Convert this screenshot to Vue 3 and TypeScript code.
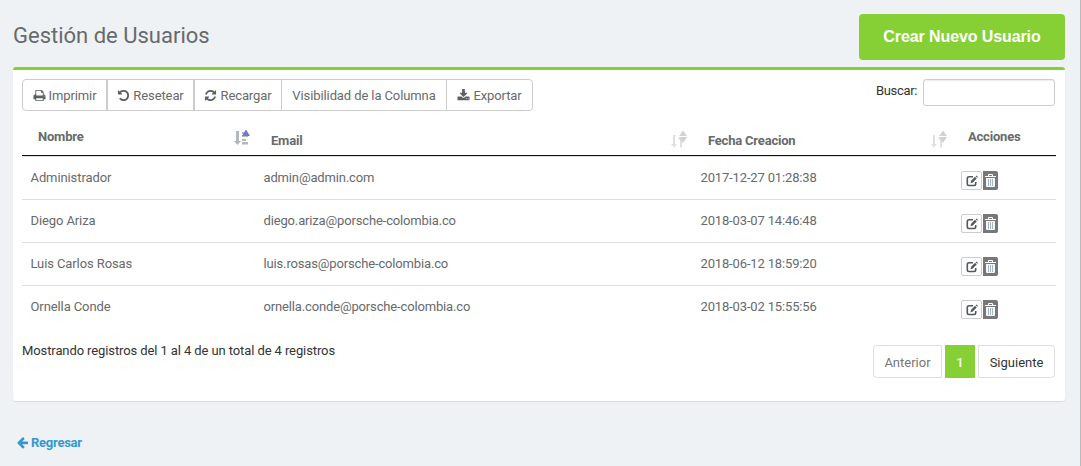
<script setup lang="ts">
interface User {
  name: string
  email: string
  created: string
}
interface Tool {
  label: string
  icon?: string
}

const users: User[] = [
  { name: 'Administrador', email: 'admin@admin.com', created: '2017-12-27 01:28:38' },
  { name: 'Diego Ariza', email: 'diego.ariza@porsche-colombia.co', created: '2018-03-07 14:46:48' },
  { name: 'Luis Carlos Rosas', email: 'luis.rosas@porsche-colombia.co', created: '2018-06-12 18:59:20' },
  { name: 'Ornella Conde', email: 'ornella.conde@porsche-colombia.co', created: '2018-03-02 15:55:56' },
]

const tools: Tool[] = [
  {
    label: 'Imprimir',
    icon: 'M448 1536h896v-256h-896v256zm0-640h896v-384h-160q-40 0-68-28t-28-68v-160h-640v640zm1152 64q0-26-19-45t-45-19-45 19-19 45 19 45 45 19 45-19 19-45zm128 0v416q0 13-9.500 22.500t-22.500 9.500h-224v160q0 40-28 68t-68 28h-960q-40 0-68-28t-28-68v-160h-224q-13 0-22.500-9.500t-9.500-22.500v-416q0-79 56.500-135.500t135.500-56.500h64v-544q0-40 28-68t68-28h672q40 0 88 20t76 48l152 152q28 28 48 76t20 88v256h64q79 0 135.500 56.500t56.500 135.500z',
  },
  {
    label: 'Resetear',
    icon: 'M1664 896q0 156-61 298t-164 245-245 164-298 61q-172 0-327-72.500t-264-204.500q-7-10-6.500-22.500t8.500-20.500l137-138q10-9 25-9 16 2 23 12 73 95 179 147t225 52q104 0 198.500-40.500t163.500-109.500 109.500-163.500 40.500-198.500-40.500-198.500-109.500-163.500-163.500-109.500-198.500-40.500q-98 0-188 35.500t-160 101.500l137 138q31 30 14 69-17 40-59 40h-448q-26 0-45-19t-19-45v-448q0-42 40-59 39-17 69 14l130 129q107-101 244.500-156.500t284.500-55.500q156 0 298 61t245 164 164 245 61 298z',
  },
  {
    label: 'Recargar',
    icon: 'M1639 1056q0 5-1 7-64 268-268 434.500t-478 166.500q-146 0-282.500-55t-243.500-157l-129 129q-19 19-45 19t-45-19-19-45v-448q0-26 19-45t45-19h448q26 0 45 19t19 45-19 45l-137 137q71 66 161 102t187 36q134 0 250-65t186-179q11-17 53-117 8-23 30-23h192q13 0 22.500 9.500t9.500 22.500zm25-800v448q0 26-19 45t-45 19h-448q-26 0-45-19t-19-45 19-45l138-138q-148-137-349-137-134 0-250 65t-186 179q-11 17-53 117-8 23-30 23h-199q-13 0-22.500-9.500t-9.500-22.500v-7q65-268 270-434.500t480-166.500q146 0 284 55.500t245 156.500l130-129q19-19 45-19t45 19 19 45z',
  },
  { label: 'Visibilidad de la Columna' },
  {
    label: 'Exportar',
    icon: 'M1344 1344q0-26-19-45t-45-19-45 19-19 45 19 45 45 19 45-19 19-45zm256 0q0-26-19-45t-45-19-45 19-19 45 19 45 45 19 45-19 19-45zm128-224v320q0 40-28 68t-68 28h-1472q-40 0-68-28t-28-68v-320q0-40 28-68t68-28h465l135 136q58 56 136 56t136-56l136-136h464q40 0 68 28t28 68zm-325-569q17 41-14 70l-448 448q-18 19-45 19t-45-19l-448-448q-31-29-14-70 17-39 59-39h256v-448q0-26 19-45t45-19h256q26 0 45 19t19 45v448h256q42 0 59 39z',
  },
]
</script>

<template>
  <div class="page">
    <header class="top">
      <h1>Gestión de Usuarios</h1>
      <button class="create">Crear Nuevo Usuario</button>
    </header>

    <section class="card">
      <div class="toolbar">
        <div class="tools">
          <button v-for="t in tools" :key="t.label" class="tool">
            <svg v-if="t.icon" viewBox="0 0 1792 1792"><path :d="t.icon" /></svg>
            <span>{{ t.label }}</span>
          </button>
        </div>
        <label class="search"><span>Buscar:</span><input type="text" /></label>
      </div>

      <div class="table">
        <div class="row head">
          <div class="cell">
            Nombre
            <svg class="sort asc" viewBox="0 0 17 18">
              <path fill="#b5b8ba" d="M2 3h3v10h2l-3.500 4-3.500-4h2zM8 4h4v2h-4zM8 7h6v2h-6zM8 11h4v2h-4zM8 14h6v2.500h-6z" />
              <path fill="#7378d8" d="M8 8l4-6.500 4 6.500z" />
            </svg>
          </div>
          <div class="cell low">
            Email
            <svg class="sort" viewBox="0 0 17 18">
              <path fill="#dfe0e2" d="M2 5h2v9h2l-3 3.500-3-3.500h2zM8 7h3v10.500h-2v-8h-2z" />
              <path fill="#d0d2d3" d="M8 6l4-5.500 4 5.500zM8 7h8l-4 6z" />
            </svg>
          </div>
          <div class="cell low">
            Fecha Creacion
            <svg class="sort" viewBox="0 0 17 18">
              <path fill="#dfe0e2" d="M2 5h2v9h2l-3 3.500-3-3.500h2zM8 7h3v10.500h-2v-8h-2z" />
              <path fill="#d0d2d3" d="M8 6l4-5.500 4 5.500zM8 7h8l-4 6z" />
            </svg>
          </div>
          <div class="cell">Acciones</div>
        </div>
        <div v-for="u in users" :key="u.email" class="row">
          <div class="cell">{{ u.name }}</div>
          <div class="cell tight">{{ u.email }}</div>
          <div class="cell tight">{{ u.created }}</div>
          <div class="cell actions">
            <button class="edit" aria-label="Editar">
              <svg viewBox="0 0 12 12">
                <path fill="none" stroke="#52585c" stroke-width="1.600" d="M7 1.800H3Q1.300 1.800 1.300 3.500v5.300Q1.300 10.500 3 10.500h5Q9.700 10.500 9.700 8.800V7" />
                <path fill="#52585c" d="M4.500 8.200l.6-2.500L9 1.800l1.700 1.700-3.900 3.900zM9.600 1.200l.9-.8 1.500 1.500-.8.900z" />
              </svg>
            </button>
            <button class="del" aria-label="Eliminar">
              <svg viewBox="0 0 11 13">
                <path fill="none" stroke="#fff" d="M3.500 2V.5h4V2" />
                <path fill="#fff" d="M0 2h11v1H0z" />
                <path fill="#f4f8fa" d="M1 4h9v8q0 1-1 1H2q-1 0-1-1z" />
                <path fill="#a9b6bb" d="M3 5h1v7H3zM5 5h1v7H5zM7 5h1v7H7z" />
              </svg>
            </button>
          </div>
        </div>
      </div>

      <footer class="foot">
        <span>Mostrando registros del 1 al 4 de un total de 4 registros</span>
        <nav class="pager">
          <a class="prev">Anterior</a>
          <a class="current">1</a>
          <a class="next">Siguiente</a>
        </nav>
      </footer>
    </section>

    <a class="back">
      <svg viewBox="0 0 1792 1792"><path d="M1664 896v128q0 53-32.500 90.500t-84.500 37.500h-704l293 294q38 36 38 90t-38 90l-75 76q-37 37-90 37-52 0-91-37l-651-652q-37-37-37-90 0-52 37-91l651-650q38-38 91-38 52 0 90 38l75 74q38 38 38 91t-38 91l-293 293h704q52 0 84.500 37.500t32.500 90.500z" /></svg>
      <span>Regresar</span>
    </a>
  </div>
</template>

<style>
body {
  margin: 0;
  background: #eef2f5;
}
</style>

<style scoped>
* {
  box-sizing: border-box;
}
.page {
  height: 466px;
  padding: 14px 15px 0 13px;
  border-right: 1px solid #b8babc;
  background: #eef2f5;
  font: 13px/18px Roboto, sans-serif;
  letter-spacing: -0.1px;
  color: #333;
  overflow: hidden;
}
button {
  font: inherit;
  letter-spacing: inherit;
  margin: 0;
}
.top {
  display: flex;
  justify-content: space-between;
  height: 53px;
}
h1 {
  margin: 8px 0 0;
  font-size: 22px;
  line-height: 28px;
  font-weight: 400;
  letter-spacing: 0;
  color: #676a6c;
}
.create {
  width: 206px;
  height: 46px;
  border: 0;
  border-radius: 4px;
  background: #86d036;
  color: #fff;
  font: bold 16px/20px "Liberation Sans", Arial, sans-serif;
  white-space: nowrap;
}
.card {
  height: 334px;
  padding: 9px 9px 0;
  border-top: 3px solid #86d036;
  border-radius: 3px;
  background: #fff;
  box-shadow: 0 1px 1px rgba(0, 0, 0, 0.1);
}
.toolbar {
  display: flex;
  justify-content: space-between;
  height: 39px;
  padding-right: 1px;
}
.tools {
  display: flex;
  height: 32px;
}
.tool {
  display: flex;
  align-items: center;
  justify-content: center;
  gap: 3px;
  width: 87px;
  padding: 1px 0 0;
  border: 1px solid #ccc;
  margin-left: -1px;
  background: #fff;
  color: #676a6c;
  white-space: nowrap;
}
.tool:first-child {
  width: 85px;
  margin-left: 0;
  border-radius: 4px 0 0 4px;
}
.tool:nth-child(2),
.tool:nth-child(3) {
  margin-left: 0;
}
.tool:nth-child(3) {
  width: 88px;
}
.tool:nth-child(4) {
  width: 166px;
}
.tool:last-child {
  border-radius: 0 4px 4px 0;
}
.tool svg {
  width: 13px;
  height: 13px;
  fill: #5c6062;
}
.search {
  display: flex;
  gap: 6px;
  letter-spacing: -0.35px;
}
.search span {
  padding-top: 3px;
}
.search input {
  width: 132px;
  height: 27px;
  border: 1px solid #ccc;
  border-radius: 3px;
  background: #fff;
  box-shadow: inset 0 1px 1px rgba(0, 0, 0, 0.075);
}
.table {
  color: #676a6c;
}
.row {
  display: grid;
  grid-template-columns: 233px 437px 260px 104px;
  height: 43px;
  border-bottom: 1px solid #ddd;
}
.row:last-child {
  border-bottom: 0;
}
.cell {
  position: relative;
  padding: 12px 0 0 8.500px;
  white-space: nowrap;
}
.tight {
  letter-spacing: -0.15px;
}
.head {
  height: 38px;
  margin-bottom: 1px;
  font-weight: 700;
  letter-spacing: -0.2px;
  border-bottom: 1px solid #111;
  box-shadow: 0 1px #ddd;
}
.head .cell {
  padding: 10px 0 0 16px;
}
.head .low {
  padding-top: 14px;
}
.sort {
  position: absolute;
  right: 4px;
  top: 12px;
  width: 17px;
  height: 18px;
}
.asc {
  top: 10px;
}
.actions {
  display: flex;
  padding: 14px 0 0 9px;
}
.edit,
.del {
  display: flex;
  align-items: center;
  justify-content: center;
  width: 21px;
  height: 19px;
  padding: 0;
  border: 1px solid #ccc;
  border-radius: 2px;
  background: #fff;
}
.edit svg {
  width: 12px;
  height: 12px;
}
.del {
  width: 15px;
  margin-left: 1px;
  border: 0;
  border-radius: 0 2px 2px 0;
  background: #777;
}
.del svg {
  width: 11px;
  height: 13px;
}
.foot {
  display: flex;
  justify-content: space-between;
  padding: 13px 1px 0 0;
}
.pager {
  display: flex;
  gap: 3px;
  padding-top: 3px;
  letter-spacing: 0;
}
.pager a {
  height: 33px;
  border: 1px solid #ddd;
  text-align: center;
  line-height: 33px;
}
.pager .prev {
  width: 69px;
  border-radius: 4px 0 0 4px;
  color: #777;
}
.pager .current {
  width: 30px;
  border-color: #86d036;
  background: #86d036;
  color: #fff;
  font-weight: 500;
}
.pager .next {
  width: 77px;
  border-radius: 0 4px 4px 0;
}
.back {
  display: flex;
  align-items: center;
  gap: 2px;
  width: max-content;
  margin: 33px 0 0 3px;
  color: #3498d2;
  font-weight: 700;
  letter-spacing: -0.25px;
}
.back svg {
  width: 13px;
  height: 13px;
  margin-top: -1px;
  fill: #3498d2;
}
</style>
